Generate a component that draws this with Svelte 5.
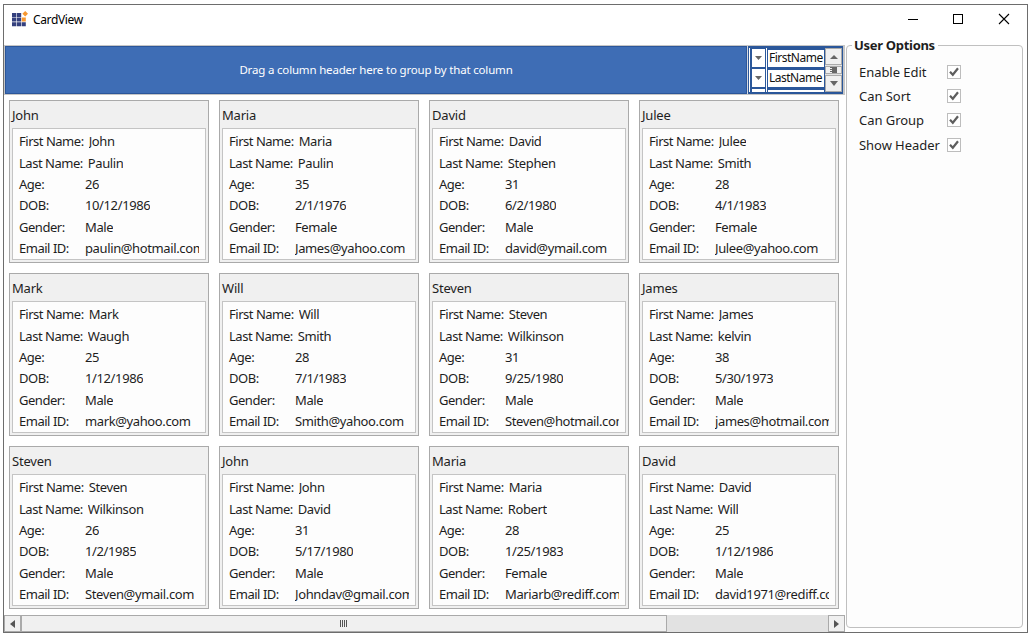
<script>
  const labels = ['First Name:', 'Last Name:', 'Age:', 'DOB:', 'Gender:', 'Email ID:'];
  const cards = [
    ['John', 'Paulin', '26', '10/12/1986', 'Male', 'paulin@hotmail.com'],
    ['Maria', 'Paulin', '35', '2/1/1976', 'Female', 'James@yahoo.com'],
    ['David', 'Stephen', '31', '6/2/1980', 'Male', 'david@ymail.com'],
    ['Julee', 'Smith', '28', '4/1/1983', 'Female', 'Julee@yahoo.com'],
    ['Mark', 'Waugh', '25', '1/12/1986', 'Male', 'mark@yahoo.com'],
    ['Will', 'Smith', '28', '7/1/1983', 'Male', 'Smith@yahoo.com'],
    ['Steven', 'Wilkinson', '31', '9/25/1980', 'Male', 'Steven@hotmail.com'],
    ['James', 'kelvin', '38', '5/30/1973', 'Male', 'james@hotmail.com'],
    ['Steven', 'Wilkinson', '26', '1/2/1985', 'Male', 'Steven@ymail.com'],
    ['John', 'David', '31', '5/17/1980', 'Male', 'Johndav@gmail.com'],
    ['Maria', 'Robert', '28', '1/25/1983', 'Female', 'Mariarb@rediff.com'],
    ['David', 'Will', '25', '1/12/1986', 'Male', 'david1971@rediff.com']
  ];
  const options = ['Enable Edit', 'Can Sort', 'Can Group', 'Show Header'];
</script>

<div class="window">
  <header>
    <svg class="logo" width="17" height="16" viewBox="0 0 17 16">
      <g fill="#34407e">
        <path d="M0 2h4.300v4H0zM4.900 2h4.300v4H4.900zM0 6.600h4.300v4H0zM4.900 6.600h4.300v4H4.900zM0 11.200h4.300v4H0zM4.900 11.200h4.300v4H4.900zM9.800 11.200h4v4h-4z" />
      </g>
      <path d="M9.800 6.600h4v4h-4zM13.200 0l2.800 2.700-2.800 2.700-2.800-2.700z" fill="#f7972f" />
    </svg>
    <span class="title">CardView</span>
    <svg class="controls" width="104" height="12" viewBox="0 0 104 12" fill="none" stroke="#000">
      <path d="M0 6.500h10M45.500 1.500h9v9h-9z" shape-rendering="crispEdges" />
      <path d="M91 1l10 10M101 1l-10 10" stroke-width="1.1" />
    </svg>
  </header>
  <div class="content">
    <main>
      <div class="band">
        <div class="drop"><span>Drag a column header here to group by that column</span></div>
        <div class="fields">
          <div class="arrows">
            {#each [0, 1, 2] as i (i)}
              <div class="arrow"><svg width="7" height="4" viewBox="0 0 7 4"><path d="M0 0h7L3.500 4z" fill="#666" /></svg></div>
            {/each}
          </div>
          <div class="names">
            <div class="name"><span>FirstName</span></div>
            <div class="name"><span>LastName</span></div>
            <div class="name"></div>
          </div>
          <div class="vscroll">
            <div class="vbtn"><svg width="8" height="4" viewBox="0 0 8 4"><path d="M4 0l4 4H0z" fill="#666" /></svg></div>
            <div class="vthumb"><svg width="7" height="6" viewBox="0 0 7 6"><path d="M0 .5h7M0 2.500h7M0 4.500h7" stroke="#666" /><path d="M2 0h5v6H2z" fill="#666" /></svg></div>
            <div class="vbtn"><svg width="8" height="5" viewBox="0 0 8 5"><path d="M0 0h8L4 5z" fill="#666" /></svg></div>
          </div>
        </div>
      </div>
      <div class="cards">
        {#each cards as card, i (i)}
          <article>
            <h2>{card[0]}</h2>
            <div class="body">
              {#each card as value, k (k)}
                <div class="row"><span class="label">{labels[k]}</span><span class="value">{value}</span></div>
              {/each}
            </div>
          </article>
        {/each}
      </div>
      <div class="hscroll">
        <div class="hbtn"><svg width="5" height="8" viewBox="0 0 5 8"><path d="M5 0v8L0 4z" fill="#555" /></svg></div>
        <div class="hthumb"><svg width="8" height="7" viewBox="0 0 8 7" shape-rendering="crispEdges"><path d="M.5 0v7M2.500 0v7M4.500 0v7M6.500 0v7" stroke="#555" /></svg></div>
        <div class="track"></div>
        <div class="hbtn"><svg width="5" height="8" viewBox="0 0 5 8"><path d="M0 0v8l5-4z" fill="#555" /></svg></div>
      </div>
    </main>
    <fieldset>
      <legend><span>User Options</span></legend>
      {#each options as option (option)}
        <div class="option">
          <span>{option}</span>
          <i><svg width="12" height="12" viewBox="0 0 12 12"><path d="M2 5.800l2.800 3L10 2.300" fill="none" stroke="#5e5e5e" stroke-width="2.200" /></svg></i>
        </div>
      {/each}
    </fieldset>
  </div>
</div>

<style>
  :global(body) { margin: 0; background: #fff; overflow: hidden; }
  * { box-sizing: border-box; }
  svg { display: block; flex: none; }
  .window {
    width: 1025px; height: 629px; margin: 4px 0 0 3px;
    border: 1px solid #6d6d6d; background: #fff; color: #1e1e1e;
    font: 13px/20px "Noto Sans", "Open Sans", sans-serif;
    white-space: nowrap; display: flex; flex-direction: column;
  }
  header { height: 40px; display: flex; align-items: flex-start; flex: none; }
  .logo { margin: 6px 4px 0 8px; }
  .title { margin-top: 5px; font-size: 12px; letter-spacing: -0.35px; color: #000; }
  .controls { margin: 8px 15px 0 auto; }
  .content { display: flex; flex: 1; min-height: 0; }
  main { width: 841px; display: flex; flex-direction: column; }
  .band { height: 50px; border: 1px solid #c6c6c6; border-width: 1px 2px 1px 1px; display: flex; gap: 1px; flex: none; background: #d5d9e2; }
  .drop {
    width: 742px; background: #3e6db5; border: 1px solid #2b569a; color: #fff;
    display: flex; align-items: center; justify-content: center;
    font-size: 11.500px; letter-spacing: -0.18px;
  }
  .fields { flex: 1; background: #2b579a; padding: 2px 1px 2px 1px; display: flex; overflow: hidden; }
  .arrows { width: 16px; border-left: 1px solid #fff; padding: 1px 0 0 2px; overflow: hidden; }
  .arrow { height: 18px; background: #fff; margin-bottom: 2px; display: flex; align-items: center; justify-content: center; }
  .names { width: 58px; padding: 2px 0 0 1px; border-left: 1px solid #fff; margin: 0 1px; overflow: hidden; }
  .name { height: 17px; background: #fff; margin-bottom: 3px; padding-left: 1px; line-height: 16px; font-size: 12px; letter-spacing: -0.5px; overflow: hidden; color: #111; }
  .vscroll { width: 17px; background: #e2e2e2; }
  .vbtn { height: 17px; border: 1px solid #aaa; background: #f0f0f0; display: flex; align-items: center; justify-content: center; }
  .vthumb { height: 8px; margin: 1px 0; border: 1px solid #aaa; background: #f0f0f0; display: flex; align-items: center; justify-content: center; }
  .cards { flex: 1; padding: 5px 0 0 5px; display: grid; grid-template-columns: repeat(4, 200px); grid-auto-rows: 163px; gap: 10px; }
  article { border: 1px solid #aaa; background: #f0f0f0; padding: 0 2px 2px; display: flex; flex-direction: column; }
  h2 { height: 27px; flex: none; margin: 0; padding-top: 4px; font-size: 13px; line-height: 20px; font-weight: 400; letter-spacing: -0.2px; }
  .body { flex: 1; min-height: 0; border: 1px solid #c4c4c4; background: #fdfdfd; padding: 2.200px 6px 0; letter-spacing: -0.38px; }
  .row { height: 21.360px; line-height: 21px; display: flex; }
  .label { min-width: 66px; flex: none; letter-spacing: -0.48px; }
  .row:nth-child(-n + 2) .label { padding-right: 5px; }
  .value { overflow: hidden; }
  .hscroll { height: 17px; display: flex; background: #e2e2e2; flex: none; }
  .hbtn { width: 17px; border: 1px solid #aaa; background: #f0f0f0; display: flex; align-items: center; justify-content: center; flex: none; }
  .hthumb { width: 646px; border: 1px solid #aaa; background: #f0f0f0; display: flex; align-items: center; justify-content: center; }
  .track { flex: 1; }
  fieldset { width: 177px; height: 593px; margin: -10px 0 0 1px; padding: 4.700px 0 0 12px; border: 1px solid #c0c0c0; border-radius: 4px; background: #fdfdfd; min-width: 0; }
  legend { margin-left: -7px; padding: 0 3px 0 2px; height: 20px; font-weight: 700; letter-spacing: -0.3px; }
  .option { height: 24.300px; display: flex; align-items: center; letter-spacing: -0.05px; }
  .option span { width: 88px; }
  i { width: 14px; height: 14px; border: 1px solid #bdbdbd; background: #fff; }
</style>
